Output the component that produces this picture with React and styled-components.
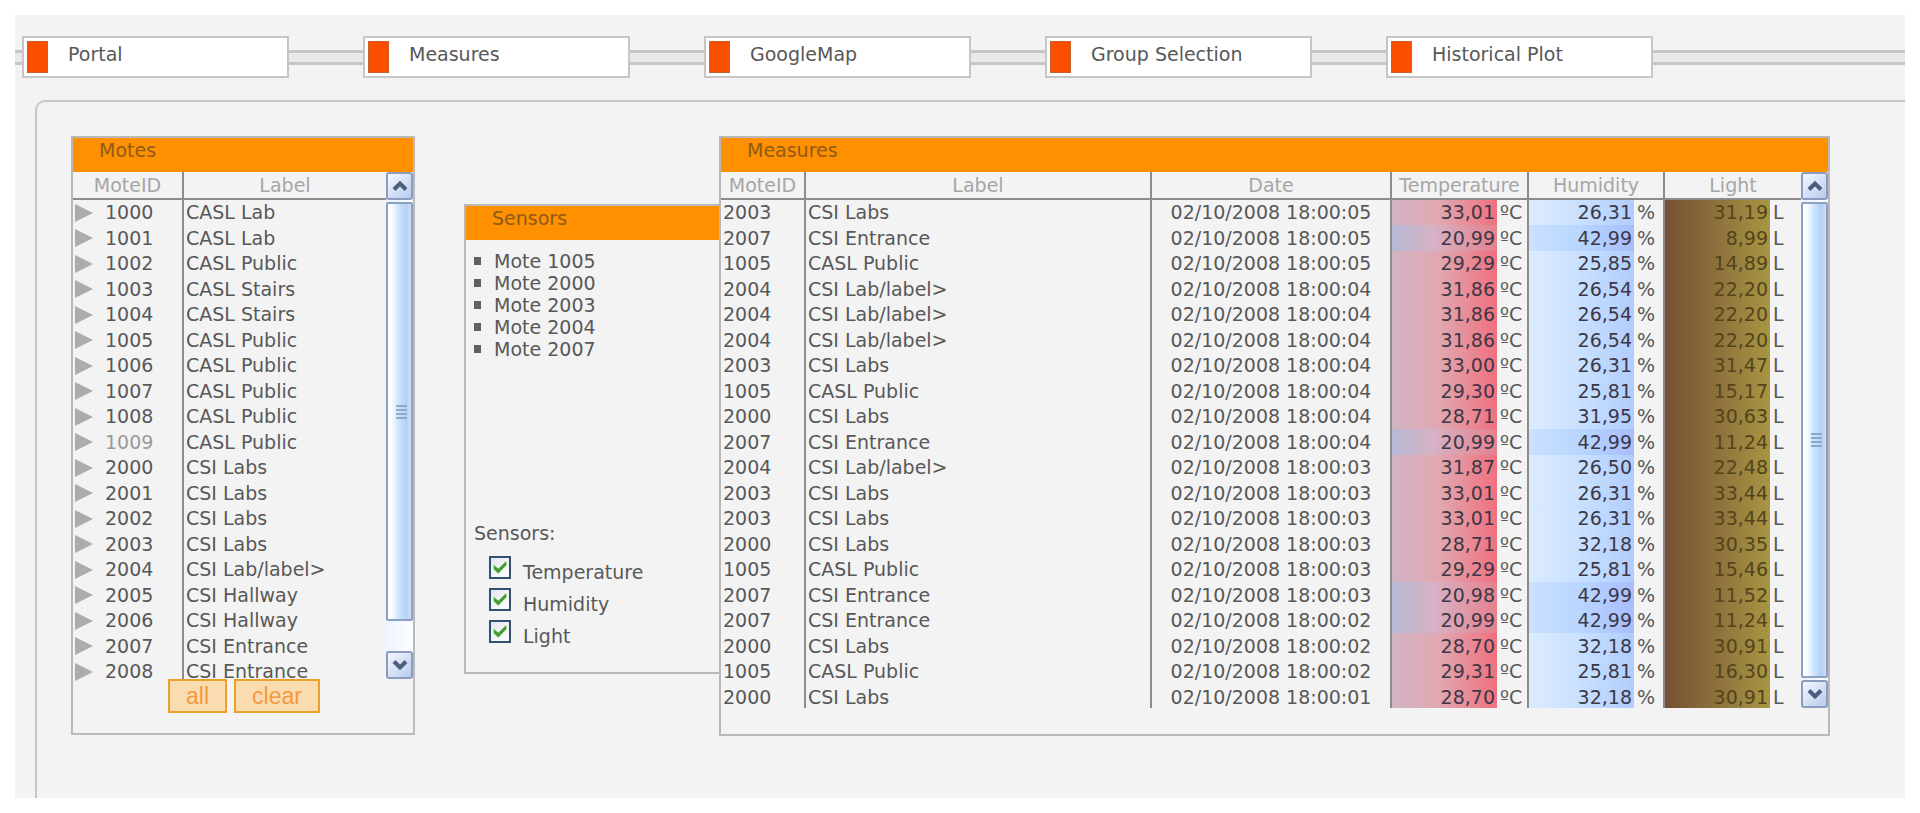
import React from "react";
import styled, { createGlobalStyle } from "styled-components";

const colors = {
  page: "#f3f3f3",
  line: "#c6c6c6",
  border: "#b9b9b9",
  rule: "#8c8c8c",
  text: "#585858",
  muted: "#a6a6a6",
  orange: "#ff9000",
  red: "#fb4f00",
  title: "#8f5a1a"
};

const GlobalStyle = createGlobalStyle`
  *, *::before, *::after {
    box-sizing: border-box;
  }
  body {
    margin: 0;
    background: #fff;
    color: ${colors.text};
    font-family: "DejaVu Sans", Verdana, sans-serif;
    font-size: 19px;
  }
`;

const Page = styled.div`
  display: flex;
  flex-direction: column;
  min-height: calc(100vh - 30px);
  margin: 15px;
  padding-top: 21px;
  background: ${colors.page};
`;

const Nav = styled.nav`
  display: flex;
  align-items: center;
  margin-bottom: 22px;
`;

const Rail = styled.span`
  flex: ${props => (props.$width ? `0 1 ${props.$width}px` : "1")};
  height: 15px;
  border: solid ${colors.line};
  border-width: 3px 0;
  background: #e9e9e9;
`;

const NavLink = styled.a`
  display: flex;
  align-items: flex-start;
  width: 267px;
  height: 42px;
  padding: 3px;
  border: 2px solid ${colors.line};
  background: #fff;
  color: ${colors.text};
  line-height: 26px;
  text-decoration: none;
  white-space: nowrap;

  &::before {
    content: "";
    width: 21px;
    height: 32px;
    margin-right: 20px;
    border: 1px solid #c9622c;
    background: ${colors.red};
  }
`;

const Frame = styled.main`
  display: flex;
  flex: 1;
  align-items: flex-start;
  margin-left: 20px;
  padding: 34px 75px 34px 34px;
  border: solid ${colors.line};
  border-width: 2px 0 0 2px;
  border-top-left-radius: 10px;
`;

const Panel = styled.section`
  border: 2px solid ${colors.border};
`;

const MotesPanel = styled(Panel)`
  flex: 0 0 344px;
  margin-right: 49px;
  padding-bottom: 20px;
`;

const SensorsPanel = styled(Panel)`
  flex: 0 0 255px;
  margin-top: 68px;
  padding-bottom: 20px;
  border-right: 0;
`;

const MeasuresPanel = styled(Panel)`
  flex: 1;
  min-width: 0;
  padding-bottom: 26px;
`;

const Title = styled.h2`
  height: 34px;
  margin: 0;
  padding-left: 26px;
  background: ${colors.orange};
  color: ${colors.title};
  font-size: 19px;
  font-weight: 400;
  line-height: 24px;
`;

const ScrollArea = styled.div`
  display: flex;
  height: ${props => props.$height}px;
  overflow: ${props => (props.$clip ? "hidden" : "visible")};
`;

const TableBox = styled.div`
  flex: 1;
  min-width: 0;
`;

const Table = styled.table`
  width: 100%;
  table-layout: fixed;
  border-spacing: 0;
  white-space: nowrap;

  tr {
    line-height: 25px;
  }
  thead tr,
  tbody tr:nth-child(even) {
    line-height: 26px;
  }
`;

const Col = styled.col`
  width: ${props => props.$width}px;
`;

const Th = styled.th`
  padding: 0;
  border-bottom: 2px solid ${colors.rule};
  color: ${colors.muted};
  font-weight: 400;
  text-align: center;

  & + & {
    border-left: 2px solid ${colors.rule};
  }
`;

const Td = styled.td`
  padding: 0 2px;
  color: ${props => (props.$dim ? "#9a9a9a" : colors.text)};
  text-align: ${props => props.$align || "left"};

  & + & {
    border-left: 2px solid ${colors.rule};
  }
`;

const ValueTd = styled.td`
  padding: 0;
  border-left: 2px solid ${colors.rule};
`;

const gradients = {
  warm: "#d2b4c4, #e0a8b0 45%, #f0707e",
  cold: "#b8b8d6, #d6b2c4 40%, #e6808e",
  dry: "#dcebff, #c8e0ff 50%, #b0ccfc",
  humid: "#ccdfff, #b8d6ff 50%, #a8bcfc",
  light: "#755032, #8a6e3c 45%, #a89642"
};

const Value = styled.div`
  display: flex;
`;

const Amount = styled.span`
  width: 105px;
  padding-right: 2px;
  background: linear-gradient(to right, ${props => gradients[props.$tone]});
  color: ${props => (props.$tone === "light" ? "#54441c" : "#3c3848")};
  text-align: right;
`;

const Unit = styled.span`
  padding-left: 3px;
`;

const MoteCell = styled.div`
  display: flex;
  align-items: center;
  gap: 12px;

  &::before {
    content: "";
    border: solid transparent;
    border-width: 9px 0 9px 18px;
    border-left-color: #acacac;
  }
`;

const Bar = styled.div`
  display: flex;
  flex-direction: column;
  flex: 0 0 27px;
  gap: 2px;
  background: linear-gradient(to right, #edf4ff, #fdfeff);
`;

const ArrowButton = styled.button`
  display: flex;
  align-items: center;
  justify-content: center;
  height: 28px;
  padding: 0;
  border: 2px solid #8c9cc0;
  border-radius: 3px;
  background: linear-gradient(135deg, #f4f8ff, #b8cbec);
`;

const Thumb = styled.div`
  display: flex;
  flex: 1;
  flex-direction: column;
  align-items: center;
  justify-content: center;
  gap: 2px;
  margin-bottom: ${props => props.$rest}px;
  padding-left: 3px;
  border: 2px solid #8ba0c2;
  border-radius: 2px;
  background: linear-gradient(to right, #fff 12%, #c8e3fc 50%, #b4d0f4 80%, #d4def0);

  span {
    width: 11px;
    height: 2px;
    background: #8ea8cc;
  }
`;

const Actions = styled.div`
  display: flex;
  gap: 7px;
  padding-left: 95px;
`;

const ActionButton = styled.button`
  height: 34px;
  padding: 0 16px;
  border: 2px solid #eba02c;
  background: #fbdcb0;
  color: #f39a3e;
  font-family: "Liberation Sans", Arial, sans-serif;
  font-size: 23px;
  line-height: 28px;
`;

const MoteList = styled.ul`
  min-height: 280px;
  margin: 0;
  padding: 10px 0 0 8px;
  list-style: none;
  line-height: 22px;
`;

const MoteItem = styled.li`
  display: flex;
  align-items: center;
  gap: 13px;

  &::before {
    content: "";
    width: 7px;
    height: 8px;
    background: #606060;
  }
`;

const Fieldset = styled.fieldset`
  margin: 0;
  padding: 0 0 0 8px;
  border: 0;

  legend {
    padding: 0;
    margin-bottom: 10px;
    line-height: 26px;
  }
`;

const CheckRow = styled.label`
  display: flex;
  align-items: flex-start;
  gap: 12px;
  padding-left: 15px;
  line-height: 32px;
`;

const Checkbox = styled.input`
  appearance: none;
  width: 22px;
  height: 23px;
  margin: 0;
  padding: 2px;
  border: 2px solid #34506e;
  background: linear-gradient(135deg, #e0e8ea, #fff);

  &:checked::before {
    content: "";
    display: block;
    width: 14px;
    height: 14px;
    background: #43a02e;
    clip-path: polygon(5% 35%, 38% 62%, 95% 8%, 95% 38%, 38% 96%, 5% 66%);
  }
`;

const navItems = ["Portal", "Measures", "GoogleMap", "Group Selection", "Historical Plot"];

const motes = [
  ["1000", "CASL Lab"],
  ["1001", "CASL Lab"],
  ["1002", "CASL Public"],
  ["1003", "CASL Stairs"],
  ["1004", "CASL Stairs"],
  ["1005", "CASL Public"],
  ["1006", "CASL Public"],
  ["1007", "CASL Public"],
  ["1008", "CASL Public"],
  ["1009", "CASL Public"],
  ["2000", "CSI Labs"],
  ["2001", "CSI Labs"],
  ["2002", "CSI Labs"],
  ["2003", "CSI Labs"],
  ["2004", "CSI Lab/label>"],
  ["2005", "CSI Hallway"],
  ["2006", "CSI Hallway"],
  ["2007", "CSI Entrance"],
  ["2008", "CSI Entrance"]
];

const selected = ["1005", "2000", "2003", "2004", "2007"];

const measures = [
  ["2003", "CSI Labs", "05", "33,01", "26,31", "31,19"],
  ["2007", "CSI Entrance", "05", "20,99", "42,99", "8,99"],
  ["1005", "CASL Public", "05", "29,29", "25,85", "14,89"],
  ["2004", "CSI Lab/label>", "04", "31,86", "26,54", "22,20"],
  ["2004", "CSI Lab/label>", "04", "31,86", "26,54", "22,20"],
  ["2004", "CSI Lab/label>", "04", "31,86", "26,54", "22,20"],
  ["2003", "CSI Labs", "04", "33,00", "26,31", "31,47"],
  ["1005", "CASL Public", "04", "29,30", "25,81", "15,17"],
  ["2000", "CSI Labs", "04", "28,71", "31,95", "30,63"],
  ["2007", "CSI Entrance", "04", "20,99", "42,99", "11,24"],
  ["2004", "CSI Lab/label>", "03", "31,87", "26,50", "22,48"],
  ["2003", "CSI Labs", "03", "33,01", "26,31", "33,44"],
  ["2003", "CSI Labs", "03", "33,01", "26,31", "33,44"],
  ["2000", "CSI Labs", "03", "28,71", "32,18", "30,35"],
  ["1005", "CASL Public", "03", "29,29", "25,81", "15,46"],
  ["2007", "CSI Entrance", "03", "20,98", "42,99", "11,52"],
  ["2007", "CSI Entrance", "02", "20,99", "42,99", "11,24"],
  ["2000", "CSI Labs", "02", "28,70", "32,18", "30,91"],
  ["1005", "CASL Public", "02", "29,31", "25,81", "16,30"],
  ["2000", "CSI Labs", "01", "28,70", "32,18", "30,91"]
];

const Arrow = ({ down }) => (
  <svg width="16" height="12" viewBox="0 0 16 12" fill="none" aria-hidden="true">
    <path
      d={down ? "M2 2.5l6 6 6-6" : "M2 9.5l6-6 6 6"}
      stroke="#4c5d80"
      strokeWidth="4"
    />
  </svg>
);

const ScrollBar = ({ rest }) => (
  <Bar>
    <ArrowButton type="button" aria-label="Scroll up">
      <Arrow />
    </ArrowButton>
    <Thumb $rest={rest}>
      <span />
      <span />
      <span />
      <span />
    </Thumb>
    <ArrowButton type="button" aria-label="Scroll down">
      <Arrow down />
    </ArrowButton>
  </Bar>
);

const Reading = ({ tone, value, unit }) => (
  <ValueTd>
    <Value>
      <Amount $tone={tone}>{value}</Amount>
      <Unit>{unit}</Unit>
    </Value>
  </ValueTd>
);

const Motes = () => (
  <MotesPanel>
    <Title>Motes</Title>
    <ScrollArea $height={507}>
      <TableBox>
        <Table>
          <colgroup>
            <Col $width={109} />
            <col />
          </colgroup>
          <thead>
            <tr>
              <Th>MoteID</Th>
              <Th>Label</Th>
            </tr>
          </thead>
          <tbody>
            {motes.map(([id, label]) => (
              <tr key={id}>
                <Td $dim={id === "1009"}>
                  <MoteCell>{id}</MoteCell>
                </Td>
                <Td>{label}</Td>
              </tr>
            ))}
          </tbody>
        </Table>
      </TableBox>
      <ScrollBar rest={28} />
    </ScrollArea>
    <Actions>
      <ActionButton type="button">all</ActionButton>
      <ActionButton type="button">clear</ActionButton>
    </Actions>
  </MotesPanel>
);

const Sensors = () => (
  <SensorsPanel>
    <Title>Sensors</Title>
    <MoteList>
      {selected.map(id => (
        <MoteItem key={id}>Mote {id}</MoteItem>
      ))}
    </MoteList>
    <Fieldset>
      <legend>Sensors:</legend>
      {["Temperature", "Humidity", "Light"].map(name => (
        <CheckRow key={name}>
          <Checkbox type="checkbox" defaultChecked />
          {name}
        </CheckRow>
      ))}
    </Fieldset>
  </SensorsPanel>
);

const Measures = () => (
  <MeasuresPanel>
    <Title>Measures</Title>
    <ScrollArea $height={536} $clip>
      <TableBox>
        <Table>
          <colgroup>
            <Col $width={83} />
            <col />
            <Col $width={240} />
            <Col $width={137} />
            <Col $width={136} />
            <Col $width={138} />
          </colgroup>
          <thead>
            <tr>
              <Th>MoteID</Th>
              <Th>Label</Th>
              <Th>Date</Th>
              <Th>Temperature</Th>
              <Th>Humidity</Th>
              <Th>Light</Th>
            </tr>
          </thead>
          <tbody>
            {measures.map(([id, label, seconds, temp, humidity, light], i) => (
              <tr key={i}>
                <Td>{id}</Td>
                <Td>{label}</Td>
                <Td $align="center">02/10/2008 18:00:{seconds}</Td>
                <Reading tone={parseInt(temp) < 25 ? "cold" : "warm"} value={temp} unit="ºC" />
                <Reading tone={parseInt(humidity) > 40 ? "humid" : "dry"} value={humidity} unit="%" />
                <Reading tone="light" value={light} unit="L" />
              </tr>
            ))}
          </tbody>
        </Table>
      </TableBox>
      <ScrollBar rest={0} />
    </ScrollArea>
  </MeasuresPanel>
);

const App = () => (
  <>
    <GlobalStyle />
    <Page>
      <Nav>
        {navItems.map((item, i) => (
          <React.Fragment key={item}>
            <Rail $width={i === 0 ? 7 : 74} />
            <NavLink href="#">{item}</NavLink>
          </React.Fragment>
        ))}
        <Rail />
      </Nav>
      <Frame>
        <Motes />
        <Sensors />
        <Measures />
      </Frame>
    </Page>
  </>
);

export default App;
